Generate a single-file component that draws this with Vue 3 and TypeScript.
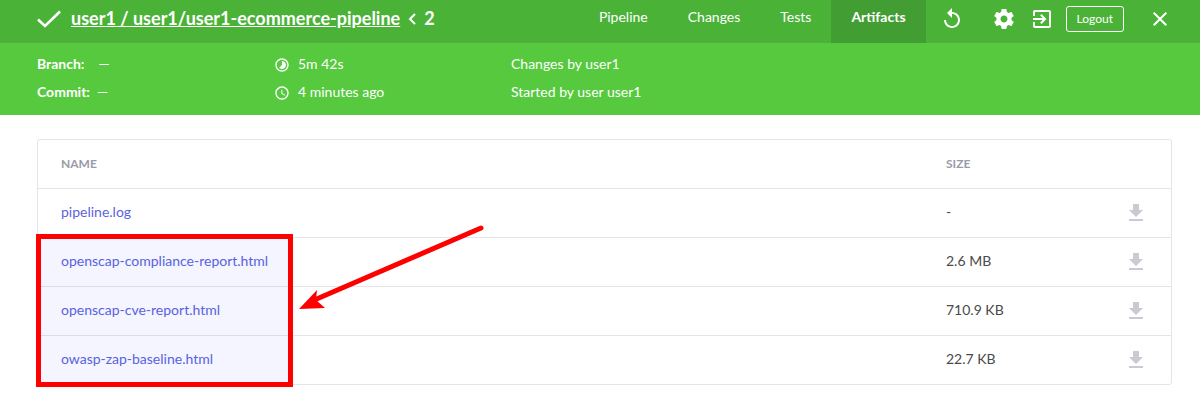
<script setup lang="ts">
interface Artifact {
  name: string
  size: string
}

const tabs: string[] = ['Pipeline', 'Changes', 'Tests', 'Artifacts']
const activeTab = 'Artifacts'

const artifacts: Artifact[] = [
  { name: 'pipeline.log', size: '-' },
  { name: 'openscap-compliance-report.html', size: '2.6 MB' },
  { name: 'openscap-cve-report.html', size: '710.9 KB' },
  { name: 'owasp-zap-baseline.html', size: '22.7 KB' },
]
</script>

<template>
  <div class="page">
    <header class="topbar">
      <svg class="status" viewBox="0 0 24 18" aria-hidden="true">
        <path d="M1 9.5 L8 16 L23 1.5" fill="none" stroke="#fff" stroke-width="2.6" />
      </svg>
      <h1 class="title">
        <a href="#">user1 / user1/user1-ecommerce-pipeline</a>
        <svg class="chevron" viewBox="0 0 8 12" aria-hidden="true">
          <path d="M7 1 L2 6 L7 11" fill="none" stroke="#fff" stroke-width="2" />
        </svg>
        <span>2</span>
      </h1>
      <nav class="tabs">
        <a v-for="tab in tabs" :key="tab" href="#" class="tab" :class="{ active: tab === activeTab }">{{ tab }}</a>
      </nav>
      <div class="actions">
        <button class="icon rerun" type="button" aria-label="Rerun">
          <svg viewBox="0 0 24 24"><path d="M12 5V1L7 6l5 5V7c3.31 0 6 2.69 6 6s-2.69 6-6 6-6-2.69-6-6H4c0 4.42 3.58 8 8 8s8-3.58 8-8-3.58-8-8-8z" /></svg>
        </button>
        <button class="icon settings" type="button" aria-label="Settings">
          <svg viewBox="0 0 24 24"><path d="M19.43 12.98c.04-.32.07-.64.07-.98s-.03-.66-.07-.98l2.11-1.65c.19-.15.24-.42.12-.64l-2-3.46c-.12-.22-.39-.3-.61-.22l-2.49 1c-.52-.4-1.08-.73-1.69-.98l-.38-2.65C14.46 2.18 14.25 2 14 2h-4c-.25 0-.46.18-.49.42l-.38 2.65c-.61.25-1.17.59-1.69.98l-2.49-1c-.23-.09-.49 0-.61.22l-2 3.46c-.13.22-.07.49.12.64l2.11 1.65c-.04.32-.07.65-.07.98s.03.66.07.98l-2.11 1.65c-.19.15-.24.42-.12.64l2 3.46c.12.22.39.3.61.22l2.49-1c.52.4 1.08.73 1.69.98l.38 2.65c.03.24.24.42.49.42h4c.25 0 .46-.18.49-.42l.38-2.65c.61-.25 1.17-.59 1.69-.98l2.49 1c.23.09.49 0 .61-.22l2-3.46c.12-.22.07-.49-.12-.64l-2.11-1.65zM12 15.5c-1.93 0-3.5-1.57-3.5-3.5s1.57-3.5 3.5-3.5 3.5 1.57 3.5 3.5-1.57 3.5-3.5 3.5z" /></svg>
        </button>
        <button class="icon classic" type="button" aria-label="Go to classic view">
          <svg viewBox="0 0 24 24"><path d="M10.09 15.59L11.5 17l5-5-5-5-1.41 1.41L12.67 11H3v2h9.67l-2.58 2.59zM19 3H5c-1.11 0-2 .9-2 2v4h2V5h14v14H5v-4H3v4c0 1.1.89 2 2 2h14c1.1 0 2-.9 2-2V5c0-1.1-.9-2-2-2z" /></svg>
        </button>
        <button class="logout" type="button">Logout</button>
        <button class="icon close" type="button" aria-label="Close">
          <svg viewBox="0 0 24 24"><path d="M19 6.41L17.59 5 12 10.59 6.41 5 5 6.41 10.59 12 5 17.59 6.41 19 12 13.41 17.59 19 19 17.59 13.41 12z" /></svg>
        </button>
      </div>
    </header>

    <section class="details">
      <div class="group">
        <div><b class="branch">Branch:</b><span>—</span></div>
        <div><b class="commit">Commit:</b><span>—</span></div>
      </div>
      <div class="group">
        <div>
          <svg class="time" viewBox="0 0 24 24" aria-hidden="true"><path d="M16.24 7.76C15.07 6.59 13.54 6 12 6v6l-4.24 4.24c2.34 2.34 6.14 2.34 8.49 0 2.34-2.34 2.34-6.14-.01-8.48zM12 2C6.48 2 2 6.48 2 12s4.48 10 10 10 10-4.48 10-10S17.52 2 12 2zm0 18c-4.42 0-8-3.58-8-8s3.58-8 8-8 8 3.58 8 8-3.58 8-8 8z" /></svg>
          <span>5m 42s</span>
        </div>
        <div>
          <svg class="time" viewBox="0 0 24 24" aria-hidden="true"><path d="M11.99 2C6.47 2 2 6.48 2 12s4.47 10 9.99 10C17.52 22 22 17.52 22 12S17.52 2 11.99 2zM12 20c-4.42 0-8-3.58-8-8s3.58-8 8-8 8 3.58 8 8-3.58 8-8 8zm.5-13H11v6l5.25 3.15.75-1.23-4.5-2.67z" /></svg>
          <span>4 minutes ago</span>
        </div>
      </div>
      <div class="group">
        <div>Changes by user1</div>
        <div>Started by user user1</div>
      </div>
    </section>

    <main class="content">
      <div class="frame">
        <table class="artifacts">
          <thead>
            <tr>
              <th class="name">NAME</th>
              <th class="size">SIZE</th>
              <th class="download"></th>
            </tr>
          </thead>
          <tbody>
            <tr v-for="item in artifacts" :key="item.name">
              <td><a href="#">{{ item.name }}</a></td>
              <td>{{ item.size }}</td>
              <td class="download">
                <a href="#" :aria-label="`Download ${item.name}`">
                  <svg viewBox="0 0 24 24"><path d="M19 9h-4V3H9v6H5l7 7 7-7zM5 18v2h14v-2H5z" /></svg>
                </a>
              </td>
            </tr>
          </tbody>
        </table>
        <div class="highlight"></div>
        <svg class="arrow" viewBox="0 0 190 90" aria-hidden="true">
          <path d="M183 7 L14 80" fill="none" stroke="#f00" stroke-width="5" stroke-linecap="round" />
          <path d="M1 88 L19 69 L18 79 L27 87 Z" fill="#f00" />
        </svg>
      </div>
    </main>
  </div>
</template>

<style>
body {
  margin: 0;
  background: #fff;
}
</style>

<style scoped>
.page {
  font: 14px/20px Lato, "Liberation Sans", sans-serif;
  color: #4a4a4a;
}

a {
  color: inherit;
  text-decoration: none;
}

svg {
  display: block;
  fill: currentColor;
}

.topbar {
  display: flex;
  height: 43px;
  padding: 0 28px 0 37px;
  background: #4bb238;
  color: #fff;
}

.status {
  width: 24px;
  height: 18px;
  margin-top: 10px;
}

.title {
  display: flex;
  align-items: center;
  height: 36px;
  margin: 0 auto 0 10px;
  font-size: 18px;
  line-height: 24px;
  font-weight: 700;
  white-space: nowrap;
}

.title a {
  text-decoration: underline;
}

.chevron {
  width: 8px;
  height: 12px;
  margin: 1px 8px 0;
}

.tabs {
  display: flex;
}

.tab {
  padding: 7px 20px 0;
}

.tab.active {
  background: #429e32;
  font-weight: 700;
}

.actions {
  display: flex;
  align-items: center;
  height: 38px;
}

button {
  padding: 0;
  border: 0;
  background: none;
  color: #fff;
  font: inherit;
  cursor: pointer;
}

.icon svg {
  width: 24px;
  height: 24px;
}

.rerun {
  margin-left: 14px;
}

.settings {
  margin-left: 28px;
}

.classic {
  margin-left: 14px;
}

.logout {
  height: 26px;
  margin-left: 12px;
  padding: 0 10px;
  border: 1px solid #fff;
  border-radius: 3px;
  font-size: 12px;
}

.close {
  margin-left: 24px;
}

.details {
  display: grid;
  grid-template-columns: 238px 236px 1fr;
  padding: 11px 37px 13px;
  background: #56c93e;
  color: #fff;
}

.group {
  display: grid;
  gap: 8px;
}

.group > div {
  display: flex;
  align-items: center;
}

.branch {
  margin-right: 14px;
}

.commit {
  margin-right: 7px;
}

.time {
  width: 16px;
  height: 16px;
  margin: 2px 8px 0 -1px;
}

.content {
  padding: 24px 28px 19px 37px;
}

.frame {
  position: relative;
}

.artifacts {
  width: 100%;
  table-layout: fixed;
  border: 1px solid #e4e4eb;
  border-radius: 3px;
  border-spacing: 0;
}

th,
td {
  height: 48px;
  padding: 0 0 0 23px;
  text-align: left;
}

td {
  height: 46px;
  padding-bottom: 2px;
  border-top: 1px solid #e4e4eb;
}

td:first-child a {
  color: #5a64e0;
}

th {
  color: #9a9aab;
  font-size: 12px;
  font-weight: 700;
}

th.size {
  width: 158px;
}

th.download {
  width: 44px;
}

.download {
  height: 48px;
  padding: 0 23px 0 0;
}

.download a {
  display: block;
  width: 24px;
  margin-left: auto;
  color: #cacad2;
}

.highlight {
  position: absolute;
  top: 95px;
  left: -1px;
  box-sizing: border-box;
  width: 257px;
  height: 153px;
  border: 5px solid #f00;
  background: rgba(70, 90, 255, 0.06);
  pointer-events: none;
}

.arrow {
  position: absolute;
  top: 82px;
  left: 261px;
  width: 190px;
  height: 90px;
  pointer-events: none;
}
</style>
